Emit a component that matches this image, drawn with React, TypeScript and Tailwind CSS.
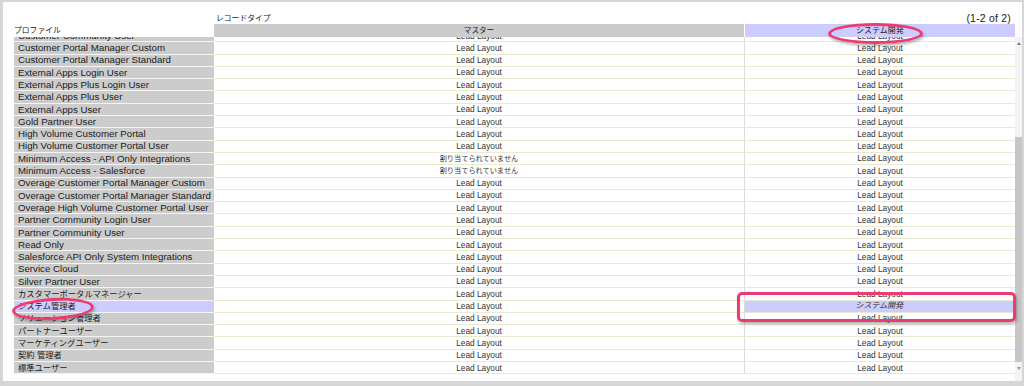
import React from 'react'

interface ProfileRow {
  name: string
  master: string
  dev: string
  selected?: boolean
}

const LEAD = 'Lead Layout'
const NONE = '割り当てられていません'

const names = [
  'Customer Community User',
  'Customer Portal Manager Custom',
  'Customer Portal Manager Standard',
  'External Apps Login User',
  'External Apps Plus Login User',
  'External Apps Plus User',
  'External Apps User',
  'Gold Partner User',
  'High Volume Customer Portal',
  'High Volume Customer Portal User',
  'Minimum Access - API Only Integrations',
  'Minimum Access - Salesforce',
  'Overage Customer Portal Manager Custom',
  'Overage Customer Portal Manager Standard',
  'Overage High Volume Customer Portal User',
  'Partner Community Login User',
  'Partner Community User',
  'Read Only',
  'Salesforce API Only System Integrations',
  'Service Cloud',
  'Silver Partner User',
  'カスタマーポータルマネージャー',
  'システム管理者',
  'ソリューション管理者',
  'パートナーユーザー',
  'マーケティングユーザー',
  '契約 管理者',
  '標準ユーザー',
]

const rows: ProfileRow[] = names.map((name) => ({
  name,
  master: name.startsWith('Minimum Access') ? NONE : LEAD,
  dev: name === 'システム管理者' ? 'システム開発' : LEAD,
  selected: name === 'システム管理者',
}))

const isJa = (s: string) => /[^\x00-\x7f]/.test(s)

function Scrollbar() {
  return (
    <div className="w-[7px] h-full flex flex-col bg-[#f3f3f3]">
      <div className="h-[12px] flex items-center justify-center">
        <div className="w-0 h-0 border-l-[2.5px] border-r-[2.5px] border-b-[3px] border-l-transparent border-r-transparent border-b-[#777]" />
      </div>
      <div className="h-[88px]" />
      <div className="h-[225px] bg-[#c6c6c6]" />
      <div className="h-[12px] flex items-center justify-center">
        <div className="w-0 h-0 border-l-[2.5px] border-r-[2.5px] border-t-[3px] border-l-transparent border-r-transparent border-t-[#999]" />
      </div>
    </div>
  )
}

export default function App() {
  return (
    <div className="relative w-[1024px] h-[386px] overflow-hidden bg-white border-l-[3px] border-t-[2px] border-r-[2px] border-b-[5px] border-[#d6d6d6] font-['Liberation_Sans','Noto_Sans_CJK_JP',sans-serif] text-[#222]">
      <div className="pl-[11px]">
        {/* title line */}
        <div className="h-[22px] flex items-end pb-[1px]">
          <div className="w-[200px]" />
          <div className="w-[801px] flex items-end justify-between pr-[4px]">
            <span className="pl-[2px] text-[7.8px] leading-none">レコードタイプ</span>
            <span className="text-[10.5px] leading-none tracking-[0.2px]">(1-2 of 2)</span>
          </div>
        </div>

        {/* header row */}
        <div className="h-[13px] grid grid-cols-[200px_531px_270px]">
          <div className="flex items-center text-[7.8px] leading-none">プロファイル</div>
          <div className="bg-[#cccccc] border-r border-white flex items-center justify-center text-[7.6px] leading-none">
            マスター
          </div>
          <div className="bg-[#ccccff] flex items-center justify-center text-[8px] leading-none">
            システム開発
          </div>
        </div>

        {/* body, scrolled a little */}
        <div className="h-[344px] flex">
          <div className="w-[1001px] h-full overflow-hidden">
            <div className="-mt-[7px]">
              {rows.map((r) => (
                <div key={r.name} className="h-[12.3px] grid grid-cols-[200px_531px_270px]">
                  <div
                    className={`${r.selected ? 'bg-[#ccccff]' : 'bg-[#cccccc]'} border-b border-[#f4f4f4] pl-[4px] flex items-center whitespace-nowrap overflow-hidden leading-none text-[#1a1a1a] ${
                      isJa(r.name) ? 'text-[8.3px]' : 'text-[9.7px]'
                    }`}
                  >
                    {r.name}
                  </div>
                  <div
                    className={`bg-white border-b border-r border-b-[#ebe9cf] border-r-[#dcdcdc] flex items-center justify-center leading-none text-[#333] ${
                      isJa(r.master) ? 'text-[7.2px]' : 'text-[8.3px]'
                    }`}
                  >
                    {r.master}
                  </div>
                  <div
                    className={`${r.selected ? 'bg-[#ccccff] text-[8px]' : 'bg-white text-[8.3px]'} border-b border-[#ebe9cf] flex items-center justify-center leading-none text-[#333]`}
                  >
                    {r.selected ? <span className="inline-block -skew-x-12">{r.dev}</span> : r.dev}
                  </div>
                </div>
              ))}
            </div>
          </div>
          <Scrollbar />
        </div>
      </div>

      {/* annotations */}
      <div className="absolute left-[825px] top-[21px] w-[95px] h-[21px] rounded-[50%] border-[3px] border-[#ec3a72] shadow-[1px_2px_3px_rgba(0,0,0,0.3)]" />
      <div className="absolute left-[9px] top-[296px] w-[82px] h-[22px] rounded-[50%] border-[3px] border-[#ec3a72] -rotate-[3deg] shadow-[1px_2px_3px_rgba(0,0,0,0.3)]" />
      <div className="absolute left-[734px] top-[290px] w-[279px] h-[30px] rounded-[5px] border-[3px] border-[#ec3a72] shadow-[1px_2px_3px_rgba(0,0,0,0.3)]" />
    </div>
  )
}
